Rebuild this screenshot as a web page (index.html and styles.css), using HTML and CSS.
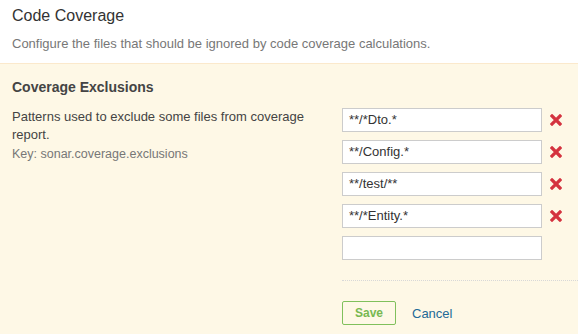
FILE: index.html
```html
<!DOCTYPE html>
<html>
<head>
<meta charset="utf-8">
<link rel="stylesheet" href="styles.css">
</head>
<body>
<div class="header">
  <h1 class="title">Code Coverage</h1>
  <p class="subtitle">Configure the files that should be ignored by code coverage calculations.</p>
</div>
<div class="section">
  <h2 class="section-title">Coverage Exclusions</h2>
  <div class="setting">
    <div class="setting-desc">
      <p class="desc">Patterns used to exclude some files from coverage report.</p>
      <p class="key">Key: sonar.coverage.exclusions</p>
    </div>
    <div class="setting-values">
      <div class="value-row">
        <div class="input">**/*Dto.*</div>
        <svg class="remove" viewBox="0 0 12 12"><path d="M2 2 L10 10 M10 2 L2 10" stroke="#d4333f" stroke-width="3.2" stroke-linecap="square"/></svg>
      </div>
      <div class="value-row">
        <div class="input">**/Config.*</div>
        <svg class="remove" viewBox="0 0 12 12"><path d="M2 2 L10 10 M10 2 L2 10" stroke="#d4333f" stroke-width="3.2" stroke-linecap="square"/></svg>
      </div>
      <div class="value-row">
        <div class="input">**/test/**</div>
        <svg class="remove" viewBox="0 0 12 12"><path d="M2 2 L10 10 M10 2 L2 10" stroke="#d4333f" stroke-width="3.2" stroke-linecap="square"/></svg>
      </div>
      <div class="value-row">
        <div class="input">**/*Entity.*</div>
        <svg class="remove" viewBox="0 0 12 12"><path d="M2 2 L10 10 M10 2 L2 10" stroke="#d4333f" stroke-width="3.2" stroke-linecap="square"/></svg>
      </div>
      <div class="value-row">
        <div class="input"></div>
      </div>
    </div>
  </div>
  <div class="footer">
    <button class="save">Save</button>
    <a class="cancel">Cancel</a>
  </div>
</div>
</body>
</html>
```
FILE: styles.css
```css
html, body {
  margin: 0;
  padding: 0;
  height: 100%;
}
body {
  font-family: "Liberation Sans", Arial, sans-serif;
  color: #444;
  background: #fef8e6;
  display: flex;
  flex-direction: column;
}
.header {
  background: #fff;
  padding: 6px 12px 0 12px;
  height: 57px;
  border-bottom: 1px solid #fbe9cc;
}
.title {
  margin: 0;
  font-size: 16px;
  font-weight: normal;
  line-height: 20px;
  color: #333;
}
.subtitle {
  margin: 10px 0 0 0;
  font-size: 13px;
  line-height: 16px;
  color: #777;
}
.section {
  flex: 1;
  background: #fef8e6;
  padding: 14px 0 0 12px;
}
.section-title {
  margin: 0;
  font-size: 14px;
  font-weight: bold;
  line-height: 18px;
  color: #444;
}
.setting {
  display: flex;
  margin-top: 12px;
}
.setting-desc {
  width: 310px;
  margin-right: 20px;
  padding-top: 0;
}
.desc {
  margin: 0;
  font-size: 13px;
  line-height: 18px;
  color: #444;
}
.key {
  margin: 2px 0 0 0;
  font-size: 12.5px;
  line-height: 16px;
  color: #777;
}
.setting-values {
  display: flex;
  flex-direction: column;
  gap: 8px;
}
.value-row {
  display: flex;
  align-items: center;
  gap: 8px;
}
.input {
  box-sizing: border-box;
  width: 200px;
  height: 24px;
  border: 1px solid #ccc;
  background: #fff;
  font-size: 13px;
  line-height: 22px;
  padding-left: 6px;
  color: #333;
}
.remove {
  width: 12px;
  height: 12px;
}
.footer {
  margin-left: 330px;
  margin-top: 20px;
  border-top: 1px dotted #d8d8d8;
  padding-top: 20px;
  display: flex;
  align-items: center;
  gap: 16px;
}
.save {
  box-sizing: border-box;
  height: 24px;
  width: 54px;
  border: 1px solid #80c05c;
  border-radius: 2px;
  background: transparent;
  color: #78b851;
  font-family: "Liberation Sans", Arial, sans-serif;
  font-size: 12px;
  font-weight: bold;
  padding: 0;
}
.cancel {
  font-size: 13px;
  color: #236a97;
}
```
